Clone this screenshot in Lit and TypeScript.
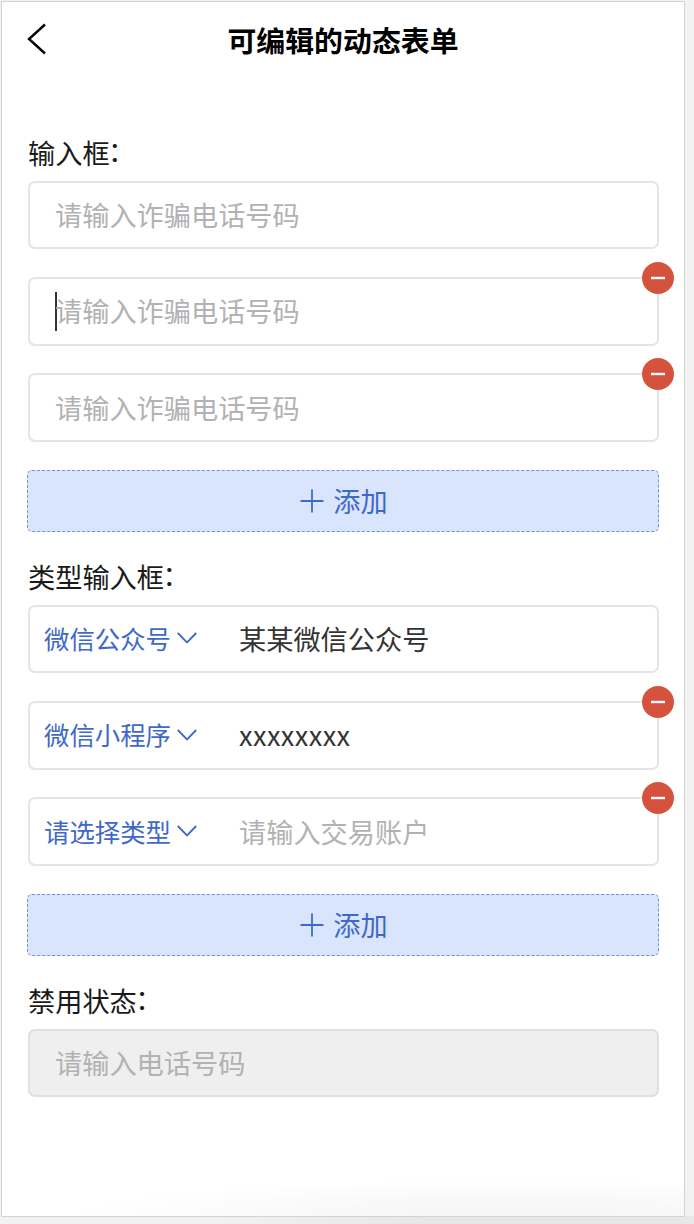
import { LitElement, html, css, svg, nothing } from 'lit';
import { customElement, property, state } from 'lit/decorators.js';

interface PhoneRow {
  value: string;
  focused?: boolean;
}

interface TypedRow {
  type: string;
  value: string;
}

const minusIcon = svg`<path d="M9 16H23" />`;

@customElement('form-field')
export class FormField extends LitElement {
  static override styles = css`
    :host {
      display: block;
    }

    .field {
      position: relative;
      display: flex;
      align-items: center;
      box-sizing: border-box;
      height: 68.8px;
      margin-left: 1px;
      padding: 0 0 2px 25px;
      border: 2px solid #e4e4e4;
      border-radius: 7px;
      background: #fff;
      font-size: 27.2px;
      line-height: 40px;
      white-space: nowrap;
    }

    .typed {
      padding-left: 14px;
    }

    .disabled {
      border-color: #e0e0e0;
      background: #efefef;
    }

    .select {
      display: flex;
      align-items: center;
      gap: 6px;
      width: 195px;
      color: #4068c8;
      font-size: 25.4px;
    }

    .select svg {
      width: 20px;
      height: 12px;
      margin-top: 1px;
      fill: none;
      stroke: currentColor;
      stroke-width: 1.8;
    }

    .value {
      color: #333;
    }

    .latin {
      letter-spacing: 0.4px;
    }

    .placeholder {
      color: #b2b2b2;
    }

    .caret {
      width: 2px;
      height: 39px;
      margin: 2px -2px 0 0;
      background: #333;
    }

    .remove {
      position: absolute;
      top: -17px;
      right: -17px;
      width: 32px;
      height: 32px;
      padding: 0;
      border: none;
      border-radius: 50%;
      background: #d5533d;
      cursor: pointer;
    }

    .remove svg {
      display: block;
      stroke: #fff;
      stroke-width: 2.4;
    }
  `;

  @property({ type: String })
  value = '';

  @property({ type: String })
  placeholder = '';

  @property({ type: String })
  type = '';

  @property({ type: Boolean })
  focused = false;

  @property({ type: Boolean })
  disabled = false;

  @property({ type: Boolean })
  removable = false;

  private handleRemove = (): void => {
    this.dispatchEvent(new CustomEvent('field-remove', { bubbles: true, composed: true }));
  };

  override render() {
    const latin = /^[\x20-\x7e]+$/.test(this.value);
    return html`
      <div class="field ${this.type ? 'typed' : ''} ${this.disabled ? 'disabled' : ''}">
        ${this.type
          ? html`
              <div class="select">
                <span>${this.type}</span>
                <svg viewBox="0 0 20 12"><path d="M0.8 1L10 10.5L19.2 1" /></svg>
              </div>
            `
          : nothing}
        ${this.focused ? html`<span class="caret"></span>` : nothing}
        ${this.value
          ? html`<span class="value ${latin ? 'latin' : ''}">${this.value}</span>`
          : html`<span class="placeholder">${this.placeholder}</span>`}
        ${this.removable
          ? html`
              <button class="remove" @click=${this.handleRemove}>
                <svg width="32" height="32" viewBox="0 0 32 32">${minusIcon}</svg>
              </button>
            `
          : nothing}
      </div>
    `;
  }
}

@customElement('add-button')
export class AddButton extends LitElement {
  static override styles = css`
    :host {
      display: block;
    }

    button {
      display: flex;
      align-items: center;
      justify-content: center;
      gap: 9px;
      box-sizing: border-box;
      width: 100%;
      height: 62px;
      padding: 0 0 0 2px;
      border: 1px dashed #6f93dd;
      border-radius: 5px;
      background: #d9e5fd;
      color: #4068c8;
      font-family: inherit;
      font-size: 27.2px;
      line-height: 40px;
      cursor: pointer;
    }

    span {
      margin-top: -2px;
    }

    svg {
      width: 24px;
      height: 24px;
      stroke: currentColor;
      stroke-width: 1.8;
    }
  `;

  override render() {
    return html`
      <button>
        <svg viewBox="0 0 24 24"><path d="M0.5 12H23.5M12 0.5V23.5" /></svg>
        <span>添加</span>
      </button>
    `;
  }
}

@customElement('app-root')
export class AppRoot extends LitElement {
  static override styles = css`
    :host {
      display: block;
      box-sizing: border-box;
      height: 1224px;
      padding: 1px 9px 7px 1px;
      background: linear-gradient(to right, transparent 200px, #e7e7e7 420px) bottom / 100% 8px no-repeat, #f2f2f2;
      font-family: 'Noto Sans CJK SC', sans-serif;
    }

    .page {
      box-sizing: border-box;
      height: 1216px;
      padding: 0 25px;
      border: 1px solid #d2d2d2;
      background: radial-gradient(ellipse 440px 36px at 510px 100%, #f6f6f6, #f8f8f8 40%, #fff) #fff;
    }

    header {
      display: grid;
      grid-template-columns: 40px 1fr 40px;
      align-items: center;
      height: 78px;
    }

    .back {
      width: 20px;
      height: 32px;
      margin: -5px 0 0 -0.5px;
      fill: none;
      stroke: #000;
      stroke-width: 2.4;
    }

    h1 {
      margin: -4px 0 0;
      color: #000;
      font-size: 28.9px;
      font-weight: 700;
      line-height: 42px;
      text-align: center;
    }

    main {
      padding-top: 51.8px;
    }

    section {
      margin-bottom: 24px;
    }

    h2 {
      margin: 0 0 8.8px 1px;
      color: #1a1a1a;
      font-size: 27.2px;
      font-weight: 400;
      line-height: 40px;
    }

    .colon {
      display: inline-block;
      margin-left: -1.5px;
      line-height: 1;
      vertical-align: 2px;
    }

    .rows {
      display: flex;
      flex-direction: column;
      gap: 27.6px;
    }
  `;

  @state()
  private phones: PhoneRow[] = [{ value: '' }, { value: '', focused: true }, { value: '' }];

  @state()
  private accounts: TypedRow[] = [
    { type: '微信公众号', value: '某某微信公众号' },
    { type: '微信小程序', value: 'xxxxxxxx' },
    { type: '请选择类型', value: '' },
  ];

  private addPhone = (): void => {
    this.phones = [...this.phones, { value: '' }];
  };

  private addAccount = (): void => {
    this.accounts = [...this.accounts, { type: '请选择类型', value: '' }];
  };

  private renderLabel(text: string) {
    return html`<h2>${text}<span class="colon">：</span></h2>`;
  }

  override render() {
    return html`
      <div class="page">
        <header>
          <svg class="back" viewBox="0 0 20 32"><path d="M18 1.5L2 16L18 30.5" /></svg>
          <h1>可编辑的动态表单</h1>
        </header>
        <main>
          <section>
            ${this.renderLabel('输入框')}
            <div class="rows">
              ${this.phones.map(
                (row, i) => html`
                  <form-field
                    placeholder="请输入诈骗电话号码"
                    .value=${row.value}
                    ?focused=${row.focused}
                    ?removable=${i > 0}
                    @field-remove=${() => (this.phones = this.phones.filter((r) => r !== row))}
                  ></form-field>
                `
              )}
              <add-button @click=${this.addPhone}></add-button>
            </div>
          </section>
          <section>
            ${this.renderLabel('类型输入框')}
            <div class="rows">
              ${this.accounts.map(
                (row, i) => html`
                  <form-field
                    placeholder="请输入交易账户"
                    .type=${row.type}
                    .value=${row.value}
                    ?removable=${i > 0}
                    @field-remove=${() => (this.accounts = this.accounts.filter((r) => r !== row))}
                  ></form-field>
                `
              )}
              <add-button @click=${this.addAccount}></add-button>
            </div>
          </section>
          <section>
            ${this.renderLabel('禁用状态')}
            <form-field placeholder="请输入电话号码" disabled></form-field>
          </section>
        </main>
      </div>
    `;
  }
}

declare global {
  interface HTMLElementTagNameMap {
    'form-field': FormField;
    'add-button': AddButton;
    'app-root': AppRoot;
  }
}
